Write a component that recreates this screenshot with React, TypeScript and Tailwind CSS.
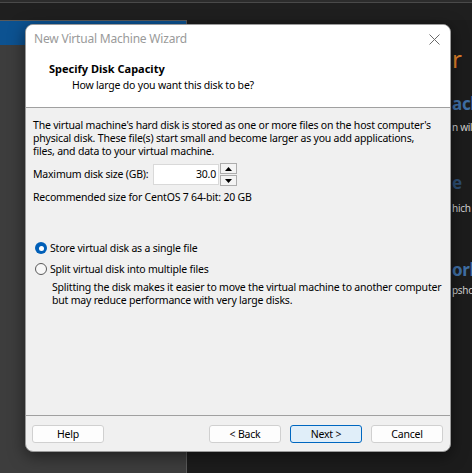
import { useState } from 'react';

const FONT = "font-['Noto_Sans','Open_Sans',sans-serif]";

function Radio({ checked }: { checked: boolean }) {
  if (checked) {
    return (
      <span className="flex h-[12px] w-[12px] shrink-0 items-center justify-center rounded-full bg-[#005fb8]">
        <span className="h-[5px] w-[5px] rounded-full bg-white" />
      </span>
    );
  }
  return <span className="h-[12px] w-[12px] shrink-0 rounded-full border border-[#5a5a5a] bg-[#f7f7f7]" />;
}

function WizardButton({ label, primary }: { label: string; primary?: boolean }) {
  return (
    <button
      className={
        primary
          ? 'h-[18px] w-[72px] rounded-[3px] border border-[#0067c0] bg-[#e0eef9] text-[10.5px] leading-none tracking-[-0.2px] text-black'
          : 'h-[18px] w-[72px] rounded-[3px] border border-[#d0d0d0] bg-[#fdfdfd] text-[10.5px] leading-none tracking-[-0.2px] text-black'
      }
    >
      {label}
    </button>
  );
}

export default function App() {
  const [size, setSize] = useState(30);
  const [split, setSplit] = useState(false);

  return (
    <div className={`relative flex h-[473px] w-[472px] flex-col overflow-hidden bg-[#1f1f1f] ${FONT}`}>
      {/* host window behind the wizard */}
      <div className="h-[2px] bg-[#2c2c2c]" />
      <div className="h-[1px] bg-[#4a4a4a]" />
      <div className="h-[17px] bg-[#1f1f1f]" />
      <div className="flex flex-1">
        <div className="flex w-[187px] shrink-0 flex-col border-t border-r border-[#5a5a5a] bg-[#3c3c3c]">
          <div className="h-[24px] bg-[#0c5291]" />
          <div className="flex-1 bg-[#3d3d3d]" />
        </div>
        <div className="flex min-w-0 flex-1 flex-col overflow-hidden whitespace-nowrap bg-[#1c1c1c] pl-[265px]">
          <div className="mt-[26px] text-[24px] leading-[26px] text-[#e0822a]">r</div>
          <div className="mt-[22px] text-[17px] font-bold leading-[20px] tracking-[-0.3px] text-[#3f6fa6]">ach</div>
          <div className="mt-[6px] text-[10px] leading-[14px] tracking-[-0.3px] text-[#cfcfcf]">n will</div>
          <div className="mt-[39px] text-[17px] font-bold leading-[20px] text-[#2d4d73]">e</div>
          <div className="mt-[8px] text-[10px] leading-[14px] tracking-[-0.3px] text-[#cfcfcf]">hich</div>
          <div className="mt-[45px] text-[17px] font-bold leading-[20px] tracking-[-0.3px] text-[#3f6fa6]">ork</div>
          <div className="mt-[3px] text-[10px] leading-[14px] tracking-[-0.3px] text-[#cfcfcf]">psho</div>
        </div>
      </div>

      {/* wizard dialog */}
      <div className="absolute left-[25px] top-[24px] flex h-[428px] w-[426px] flex-col overflow-hidden rounded-[8px] border border-[#9a9a9a] bg-[#f0f0f0] shadow-[0_4px_16px_rgba(0,0,0,0.5)]">
        <div className="flex h-[28px] items-center justify-between bg-white pl-[8px] pr-[10px]">
          <span className="text-[12px] tracking-[-0.2px] text-[#9a9a9a]">New Virtual Machine Wizard</span>
          <svg width="11" height="11" viewBox="0 0 11 11">
            <path d="M0.5 0.5 L10.5 10.5 M10.5 0.5 L0.5 10.5" stroke="#6a6a6a" strokeWidth="1" />
          </svg>
        </div>
        <div className="h-[54px] bg-white pl-[23px] pt-[9px] text-black">
          <div className="text-[11px] font-bold leading-[14px]">Specify Disk Capacity</div>
          <div className="mt-[2px] pl-[23px] text-[10.5px] leading-[14px] tracking-[-0.2px]">
            How large do you want this disk to be?
          </div>
        </div>
        <div className="h-[1px] bg-[#a0a0a0]" />
        <div className="flex flex-1 flex-col whitespace-nowrap pl-[7px] pt-[11px] text-[10.5px] leading-[13px] tracking-[-0.2px] text-black">
          <p>
            The virtual machine's hard disk is stored as one or more files on the host computer's
            <br />
            physical disk. These file(s) start small and become larger as you add applications,
            <br />
            files, and data to your virtual machine.
          </p>
          <div className="mt-[5px] flex items-center">
            <span className="w-[120px]">Maximum disk size (GB):</span>
            <div className="flex h-[21px] w-[66px] items-center justify-end border border-[#d9d9d9] bg-white pr-[2px]">
              {size.toFixed(1)}
            </div>
            <div className="ml-[1px] flex h-[23px] w-[17px] flex-col gap-[1px]">
              <button
                onClick={() => setSize(size + 1)}
                className="flex flex-1 items-center justify-center border border-[#adadad] bg-[#f4f4f4]"
              >
                <svg width="7" height="4" viewBox="0 0 7 4">
                  <path d="M0 4 L3.5 0 L7 4 Z" fill="#000" />
                </svg>
              </button>
              <button
                onClick={() => setSize(Math.max(1, size - 1))}
                className="flex flex-1 items-center justify-center border border-[#adadad] bg-[#f4f4f4]"
              >
                <svg width="7" height="4" viewBox="0 0 7 4">
                  <path d="M0 0 L7 0 L3.5 4 Z" fill="#000" />
                </svg>
              </button>
            </div>
          </div>
          <div className="mt-[5px]">Recommended size for CentOS 7 64-bit: 20 GB</div>

          <label className="mt-[36px] flex h-[16px] items-center gap-[3px] pl-[2px]" onClick={() => setSplit(false)}>
            <Radio checked={!split} />
            <span>Store virtual disk as a single file</span>
          </label>
          <label className="mt-[5px] flex h-[16px] items-center gap-[3px] pl-[2px]" onClick={() => setSplit(true)}>
            <Radio checked={split} />
            <span>Split virtual disk into multiple files</span>
          </label>
          <p className="mt-[4px] pl-[19px]">
            Splitting the disk makes it easier to move the virtual machine to another computer
            <br />
            but may reduce performance with very large disks.
          </p>
        </div>
        <div className="h-[1px] bg-[#a0a0a0]" />
        <div className="flex h-[35px] items-start justify-between pl-[6px] pr-[7px] pt-[9px]">
          <WizardButton label="Help" />
          <div className="flex gap-[9px]">
            <WizardButton label="< Back" />
            <WizardButton label="Next >" primary />
            <WizardButton label="Cancel" />
          </div>
        </div>
      </div>
    </div>
  );
}
